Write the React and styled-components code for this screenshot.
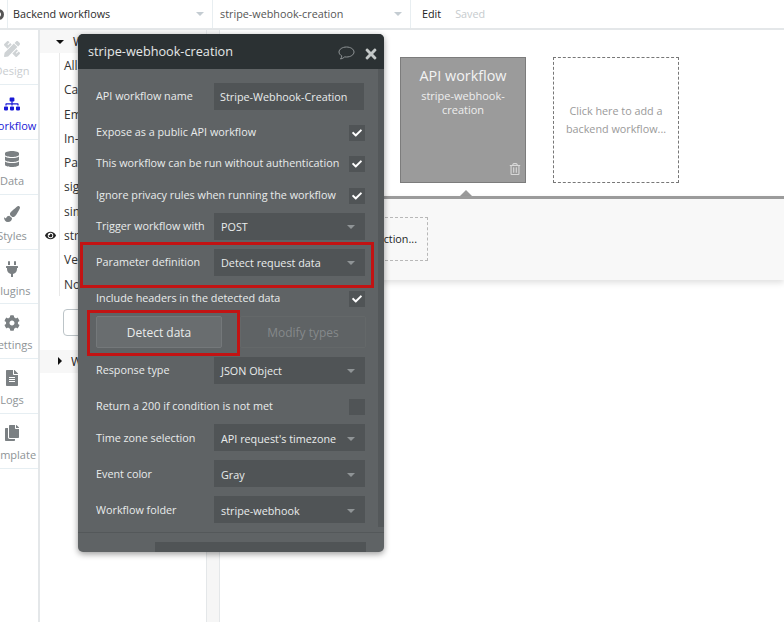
import React from "react";
import styled, { createGlobalStyle } from "styled-components";
import {
  FaPencilRuler,
  FaSitemap,
  FaDatabase,
  FaPaintBrush,
  FaPlug,
  FaCog,
  FaFileAlt,
  FaCopy,
  FaEye,
  FaCheck,
  FaTimes,
  FaRegTrashAlt,
} from "react-icons/fa";

const GlobalStyle = createGlobalStyle`
  html, body {
    margin: 0;
    padding: 0;
    background: #fff;
    font-family: "Open Sans", sans-serif;
  }
  * { box-sizing: border-box; }
`;

const tabs = [
  { label: "Design", icon: FaPencilRuler, tone: "faded" },
  { label: "Workflow", icon: FaSitemap, tone: "active" },
  { label: "Data", icon: FaDatabase },
  { label: "Styles", icon: FaPaintBrush },
  { label: "Plugins", icon: FaPlug },
  { label: "Settings", icon: FaCog },
  { label: "Logs", icon: FaFileAlt },
  { label: "Template", icon: FaCopy },
];

const items = ["All", "Ca", "Em", "In-", "Pa", "sig", "sim", "str", "Ve", "No"];

const Caret = styled.span`
  width: 0;
  height: 0;
  border-left: 4px solid transparent;
  border-right: 4px solid transparent;
  border-top: 4px solid ${(p) => p.$color || "#c4ccd2"};
  flex: none;
`;

const Page = styled.div`
  width: 784px;
  height: 622px;
  position: relative;
  overflow: hidden;
  display: flex;
  flex-direction: column;
`;

const TopBar = styled.header`
  height: 30px;
  flex: none;
  display: flex;
  border-bottom: 2px solid #e4e7e9;
  font-size: 10.8px;
  line-height: 26px;
  color: #2b2b2b;
`;

const LogoCell = styled.div`
  width: 8px;
  border-right: 1px solid #e8eef1;
  overflow: hidden;
  position: relative;
`;

const LogoDot = styled.span`
  position: absolute;
  left: -7px;
  top: 9px;
  width: 11px;
  height: 11px;
  border-radius: 50%;
  border: 3px solid #555;
`;

const PickerCell = styled.div`
  width: ${(p) => p.$width}px;
  padding: 0 8px 0 ${(p) => p.$pad}px;
  display: flex;
  align-items: center;
  justify-content: space-between;
  border-right: 1px solid #e8eef1;
  color: ${(p) => p.$color || "#2b2b2b"};
`;

const EditCell = styled.div`
  display: flex;
  align-items: center;
  gap: 14px;
  padding-left: 11px;
  color: #222;
`;

const Saved = styled.span`
  color: #c6cbce;
`;

const Body = styled.div`
  flex: 1;
  display: flex;
  min-height: 0;
`;

const SideNav = styled.nav`
  width: 40px;
  flex: none;
  border-right: 2px solid #e4e7e9;
  overflow: hidden;
`;

const NavItem = styled.div`
  width: 39px;
  height: 54.9px;
  border-bottom: 1px solid #e6eef2;
  display: flex;
  flex-direction: column;
  align-items: center;
  padding: 9px 15px 0 0;
  color: ${(p) =>
    p.$tone === "active" ? "#1a1ad6" : p.$tone === "faded" ? "#c9cdd0" : "#8e9396"};
`;

const NavIcon = styled.span`
  height: 20px;
  display: flex;
  align-items: center;
  font-size: 16px;
  color: ${(p) =>
    p.$tone === "active" ? "#1a1ad6" : p.$tone === "faded" ? "#cfd3d5" : "#7b8083"};
`;

const NavLabel = styled.span`
  font-size: 11px;
  line-height: 16px;
  white-space: nowrap;
  margin-top: 4px;
`;

const ListPanel = styled.aside`
  width: 167px;
  flex: none;
  border-right: 1px solid #e4e7e9;
  font-size: 12px;
  color: #333;
`;

const FolderRow = styled.div`
  height: 23px;
  display: flex;
  align-items: center;
  gap: 9px;
  padding-left: ${(p) => p.$indent}px;
  background: #f7f7f7;
  color: #222;
`;

const TriangleDown = styled(Caret)`
  border-top-color: #111;
`;

const TriangleRight = styled.span`
  width: 0;
  height: 0;
  border-top: 4px solid transparent;
  border-bottom: 4px solid transparent;
  border-left: 4px solid #111;
`;

const ItemList = styled.ul`
  list-style: none;
  margin: 0 0 0 19px;
  padding: 0;
  border-left: 1px solid #e8e8e8;
`;

const Item = styled.li`
  height: 24.3px;
  line-height: 26px;
  padding-left: 4px;
  position: relative;
`;

const EyeMark = styled.span`
  position: absolute;
  left: -15px;
  top: 1px;
  font-size: 11px;
  color: #222;
`;

const AddButton = styled.div`
  width: 80px;
  height: 27px;
  margin: 13px 0 14px 23px;
  border: 1px solid #bcc4c8;
  border-radius: 4px;
`;

const Gutter = styled.div`
  width: 13px;
  flex: none;
  background: #f6f6f6;
  border-right: 1px solid #e4e7e9;
`;

const Canvas = styled.main`
  flex: 1;
  min-width: 0;
  display: flex;
  flex-direction: column;
`;

const CardRow = styled.div`
  display: flex;
  gap: 27px;
  padding: 27px 0 0 180px;
`;

const EventCard = styled.div`
  width: 126px;
  height: 126px;
  position: relative;
  background: #9b9b9b;
  border: 1px solid #7c7c7c;
  color: #f3f3f3;
  text-align: center;
  padding-top: 8px;
`;

const EventKind = styled.div`
  font-size: 14.4px;
  line-height: 20px;
`;

const EventName = styled.div`
  font-size: 11px;
  line-height: 14px;
  margin: 3px auto 0;
  width: 92px;
  color: #eee;
`;

const TrashMark = styled.span`
  position: absolute;
  right: 4px;
  bottom: 3px;
  font-size: 12px;
  color: #d8d8d8;
`;

const EmptyCard = styled.div`
  width: 126px;
  height: 126px;
  border: 1px dashed #777;
  color: #9a9a9a;
  font-size: 10.8px;
  line-height: 18px;
  display: flex;
  align-items: center;
  justify-content: center;
  text-align: center;
  padding: 0 8px 1px;
`;

const Pointer = styled.div`
  width: 0;
  height: 0;
  margin: 7px 0 0 240px;
  border-left: 6px solid transparent;
  border-right: 6px solid transparent;
  border-bottom: 6px solid #9b9b9b;
`;

const ActionPanel = styled.section`
  height: 84px;
  border-top: 3px solid #9b9b9b;
  background: #f8f8f8;
  box-shadow: 0 3px 6px rgba(0, 0, 0, 0.12);
  padding: 18px 0 0 20px;
`;

const ActionSlot = styled.div`
  width: 188px;
  height: 44px;
  border: 1px dashed #b8b8b8;
  font-size: 10.8px;
  line-height: 42px;
  color: #222;
  text-align: right;
  padding-right: 10px;
  white-space: nowrap;
`;

const Modal = styled.div`
  position: absolute;
  left: 78px;
  top: 34px;
  width: 306px;
  height: 518px;
  border-radius: 5px;
  background: #5f6365;
  box-shadow: 0 2px 6px rgba(0, 0, 0, 0.4);
  overflow: hidden;
  color: #e9ecec;
`;

const ModalHeader = styled.div`
  height: 35px;
  display: flex;
  align-items: center;
  background: #2b3133;
  padding: 0 5px 0 10px;
  font-size: 12.7px;
  color: #e6e8e8;
`;

const ModalTitle = styled.span`
  flex: 1;
  margin-top: -1px;
`;

const HeaderIcons = styled.span`
  display: flex;
  align-items: center;
  gap: 8px;
  margin-top: 4px;
  color: #c4c8c8;
`;

const Scrollbar = styled.div`
  position: absolute;
  right: 0;
  top: 35px;
  width: 6px;
  height: 458px;
  background: #54585a;
`;

const Form = styled.div`
  padding: 5px 18px 0;
  height: 464px;
`;

const Row = styled.div`
  display: flex;
  align-items: center;
  justify-content: space-between;
  width: 269px;
  margin-top: ${(p) => p.$top ?? 9}px;
  height: ${(p) => p.$height || 27}px;
  font-size: 10.8px;
`;

const Label = styled.span`
  margin-top: ${(p) => (p.$check ? -3 : p.$low ? 0 : -2)}px;
  white-space: nowrap;
`;

const TextValue = styled.div`
  width: 150px;
  margin-right: 1px;
  height: 27px;
  background: #505456;
  padding-left: 6px;
  line-height: 28px;
  white-space: nowrap;
`;

const Select = styled.div`
  width: 151px;
  height: 27px;
  background: #505456;
  padding: ${(p) => (p.$low ? 2 : 0)}px 10px 0 7px;
  display: flex;
  align-items: center;
  justify-content: space-between;
  white-space: nowrap;
`;

const Check = styled.div`
  width: 16px;
  height: 16px;
  background: #505456;
  display: flex;
  align-items: center;
  justify-content: center;
  font-size: 10px;
  color: #fff;
`;

const ButtonRow = styled.div`
  display: flex;
  justify-content: space-between;
  width: 270px;
  margin-top: 9px;
`;

const ActionButton = styled.div`
  width: 126px;
  height: 32px;
  border-radius: 2px;
  border: 1px solid ${(p) => (p.$disabled ? "#646869" : "#74787a")};
  background: ${(p) => (p.$disabled ? "#5f6365" : "#696d6f")};
  color: ${(p) => (p.$disabled ? "#85898b" : "#e9ecec")};
  font-size: 12px;
  line-height: 31px;
  text-align: center;
`;

const Footer = styled.div`
  border-top: 1px solid #54585a;
  padding: 9px 0 0 77px;
  margin-top: -1px;
`;

const FooterField = styled.div`
  width: 211px;
  height: 24px;
  background: #505456;
`;

const Highlight = styled.div`
  position: absolute;
  left: ${(p) => p.$left}px;
  top: ${(p) => p.$top}px;
  width: ${(p) => p.$width}px;
  height: 46px;
  border: 3px solid #c21313;
`;

const BubbleIcon = () => (
  <svg width="17" height="15" viewBox="0 0 17 15" fill="none" stroke="#8f9496" strokeWidth="1">
    <path d="M8.5 1C4.4 1 1 3.2 1 6c0 1.6 1.1 3 2.8 3.9-.1 1.1-.6 2.2-1.3 3.1 1.7-.3 3.2-1.1 4.2-2.1.6.1 1.2.1 1.8.1 4.1 0 7.5-2.2 7.5-5S12.6 1 8.5 1z" />
  </svg>
);

const selectRow = (label, value, low) => (
  <Row>
    <Label $low={low}>{label}</Label>
    <Select $low={low}>
      {value}
      <Caret $color="#8f9496" />
    </Select>
  </Row>
);

const checkRow = (label, checked, top = 15) => (
  <Row $top={top} $height={16}>
    <Label $check>{label}</Label>
    <Check>{checked && <FaCheck />}</Check>
  </Row>
);

const App = () => {
  return (
    <>
      <GlobalStyle />
      <Page>
        <TopBar>
          <LogoCell>
            <LogoDot />
          </LogoCell>
          <PickerCell $width={205} $pad={5}>
            Backend workflows
            <Caret />
          </PickerCell>
          <PickerCell $width={198} $pad={7} $color="#555">
            stripe-webhook-creation
            <Caret />
          </PickerCell>
          <EditCell>
            Edit
            <Saved>Saved</Saved>
          </EditCell>
        </TopBar>
        <Body>
          <SideNav>
            {tabs.map((tab) => (
              <NavItem key={tab.label} $tone={tab.tone}>
                <NavIcon $tone={tab.tone}>
                  <tab.icon />
                </NavIcon>
                <NavLabel>{tab.label}</NavLabel>
              </NavItem>
            ))}
          </SideNav>
          <ListPanel>
            <FolderRow $indent={16}>
              <TriangleDown />W
            </FolderRow>
            <ItemList>
              {items.map((item) => (
                <Item key={item}>
                  {item === "str" && (
                    <EyeMark>
                      <FaEye />
                    </EyeMark>
                  )}
                  {item}
                </Item>
              ))}
            </ItemList>
            <AddButton />
            <FolderRow $indent={18}>
              <TriangleRight />W
            </FolderRow>
          </ListPanel>
          <Gutter />
          <Canvas>
            <CardRow>
              <EventCard>
                <EventKind>API workflow</EventKind>
                <EventName>stripe-webhook-creation</EventName>
                <TrashMark>
                  <FaRegTrashAlt />
                </TrashMark>
              </EventCard>
              <EmptyCard>Click here to add a backend workflow...</EmptyCard>
            </CardRow>
            <Pointer />
            <ActionPanel>
              <ActionSlot>Click here to add an action...</ActionSlot>
            </ActionPanel>
          </Canvas>
        </Body>
        <Modal>
          <ModalHeader>
            <ModalTitle>stripe-webhook-creation</ModalTitle>
            <HeaderIcons>
              <BubbleIcon />
              <FaTimes size={16} />
            </HeaderIcons>
          </ModalHeader>
          <Scrollbar />
          <Form>
            <Row>
              <Label>API workflow name</Label>
              <TextValue>Stripe-Webhook-Creation</TextValue>
            </Row>
            {checkRow("Expose as a public API workflow", true)}
            {checkRow("This workflow can be run without authentication", true)}
            {checkRow("Ignore privacy rules when running the workflow", true, 16)}
            {selectRow("Trigger workflow with", "POST")}
            {selectRow("Parameter definition", "Detect request data")}
            {checkRow("Include headers in the detected data", true)}
            <ButtonRow>
              <ActionButton>Detect data</ActionButton>
              <ActionButton $disabled>Modify types</ActionButton>
            </ButtonRow>
            {selectRow("Response type", "JSON Object")}
            {checkRow("Return a 200 if condition is not met", false)}
            {selectRow("Time zone selection", "API request's timezone", true)}
            {selectRow("Event color", "Gray", true)}
            {selectRow("Workflow folder", "stripe-webhook", true)}
          </Form>
          <Footer>
            <FooterField />
          </Footer>
          <Highlight $left={2} $top={208} $width={294} />
          <Highlight $left={9} $top={276} $width={153} />
        </Modal>
      </Page>
    </>
  );
};

export default App;
